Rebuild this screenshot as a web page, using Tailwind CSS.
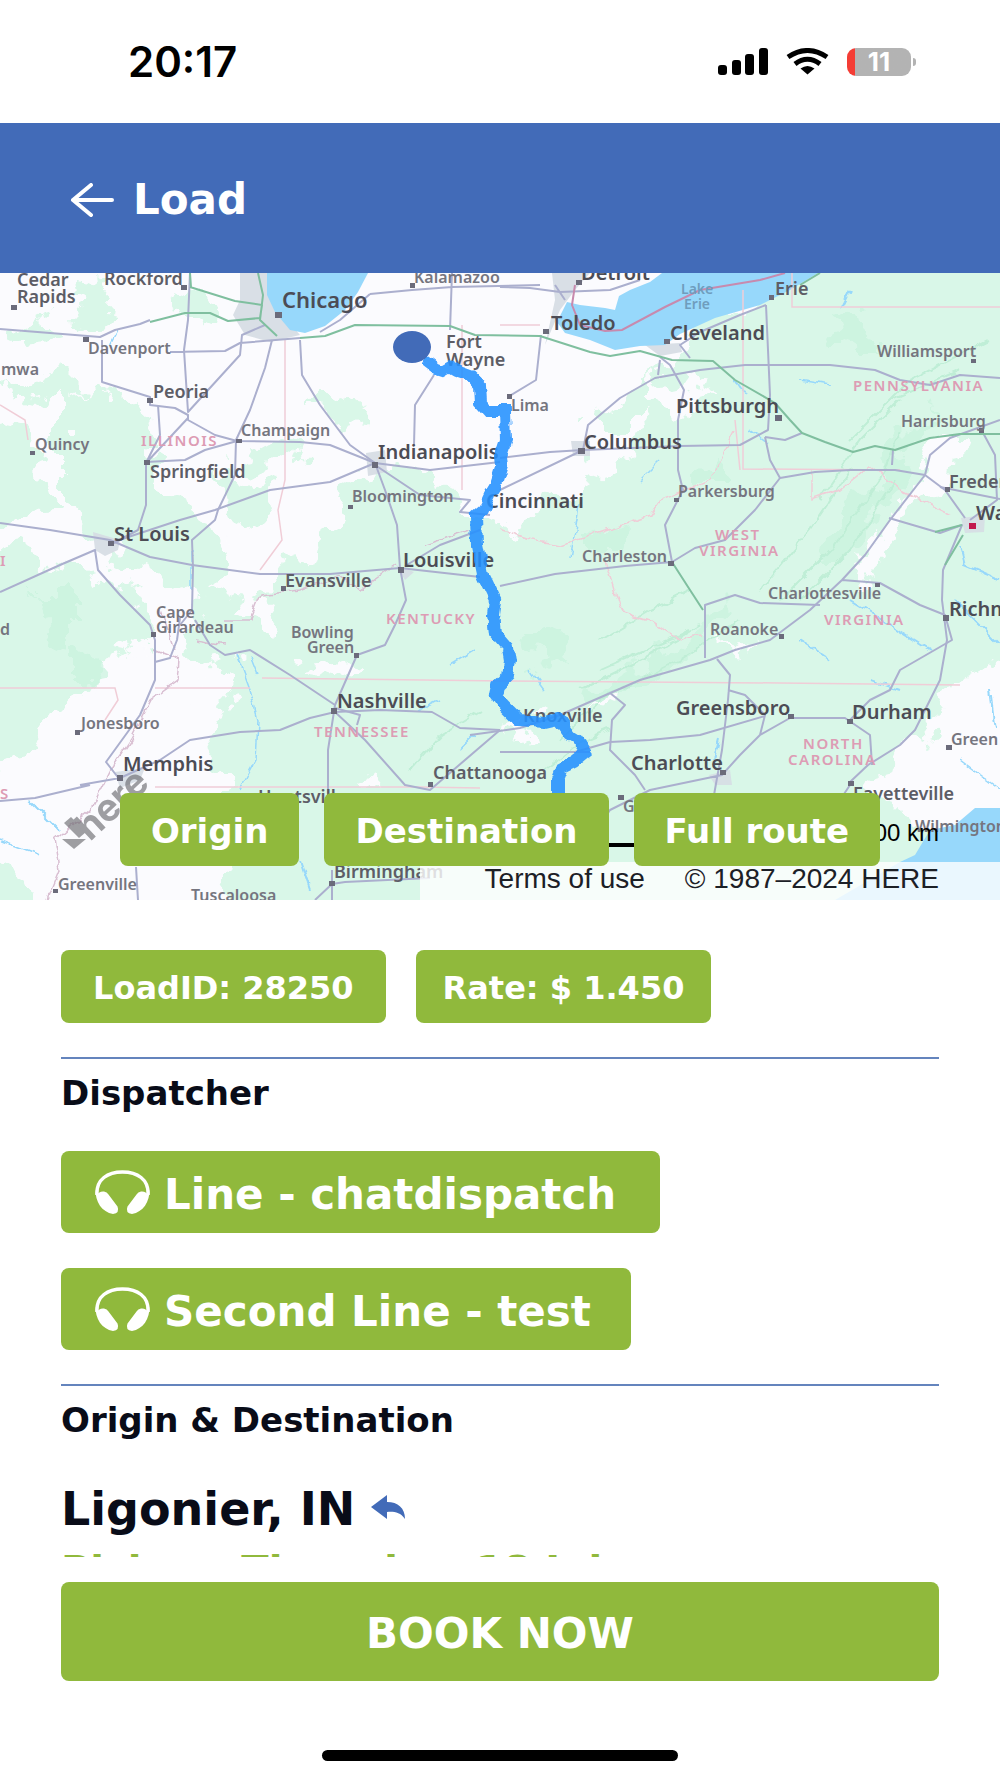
<!DOCTYPE html>
<html lang="en">
<head>
    <meta charset="UTF-8">
    <meta name="viewport" content="width=device-width, initial-scale=1.0">
    <title>Load</title>
    <script src="https://cdn.jsdelivr.net/npm/@tailwindcss/browser@4"></script>
</head>
<body class="bg-white h-screen flex flex-col overflow-hidden font-['DejaVu_Sans',sans-serif] text-[#090c18]">

    <!-- Status bar -->
    <div class="h-[123px] shrink-0 flex items-center justify-between pl-32 pr-[84px] text-black">
        <span class="font-['Inter',sans-serif] text-[42px] font-semibold">20:17</span>
        <div class="flex items-center gap-[18px]">
            <svg class="w-[50px] h-[27px]" viewBox="0 0 50 27" fill="currentColor">
                <rect x="0" y="17" width="9" height="10" rx="3"/>
                <rect x="14" y="12" width="9" height="15" rx="3"/>
                <rect x="27" y="6" width="9" height="21" rx="3"/>
                <rect x="41" y="0" width="9" height="27" rx="3"/>
            </svg>
            <svg class="w-[43px] h-[27px]" viewBox="0 0 43 27">
                <path d="M2 9Q21.500 -4 41 9M9 16Q21.500 6.500 34 16" fill="none" stroke="currentColor" stroke-width="5"/>
                <path d="M14.500 20.500Q21.500 15.500 28.500 20.500L21.500 26.500Z" fill="currentColor"/>
            </svg>
            <div class="flex items-center gap-[2px]">
                <div class="w-16 h-7 rounded-[9px] bg-linear-to-r from-[#f43d35] from-[12%] to-[#b3b3b3] to-[12%] flex items-center justify-center font-['Inter',sans-serif] text-[26px] font-bold text-white">11</div>
                <div class="w-[3px] h-2 rounded-r-full bg-[#b3b3b3]"></div>
            </div>
        </div>
    </div>

    <!-- Header -->
    <header class="h-[150px] shrink-0 flex items-center gap-[19px] px-[70px] pt-1 bg-[#426bb8] text-white">
        <button type="button" aria-label="Back">
            <svg class="w-[44px] h-[34px]" viewBox="0 0 44 34" fill="none" stroke="currentColor" stroke-width="4" stroke-linecap="round" stroke-linejoin="round">
                <path d="M42 17H3M21 2L3 17L21 32"/>
            </svg>
        </button>
        <h1 class="text-[42px] leading-[48px] font-bold">Load</h1>
    </header>

    <!-- Map -->
    <section class="relative shrink-0 overflow-hidden">
        <svg class="block w-full h-auto font-['Noto_Sans',sans-serif]" viewBox="0 273 1000 627">
            <defs>
                <filter id="rough" x="-10%" y="-10%" width="120%" height="120%">
                    <feTurbulence type="fractalNoise" baseFrequency="0.03" numOctaves="4" seed="7"/>
                    <feDisplacementMap in="SourceGraphic" scale="60" xChannelSelector="R" yChannelSelector="G"/>
                </filter>
                <filter id="wobble">
                    <feTurbulence type="fractalNoise" baseFrequency="0.08" numOctaves="2" seed="3"/>
                    <feDisplacementMap in="SourceGraphic" scale="9" xChannelSelector="R" yChannelSelector="G"/>
                </filter>
            </defs>
            <rect y="273" width="1000" height="627" fill="#fbfbfe"/>

            <!-- woodland -->
            <g fill="#d9f7e8" filter="url(#rough)">
                <path d="M1060 230H830L790 285L700 322L685 345L665 372L610 392L592 425L640 425L625 460L560 500L505 528L440 495L395 462L340 485L325 540L270 575L245 600L200 590L190 640L225 690L170 720L210 760L240 830L215 940H1060Z"/>
                <path d="M-50 540L60 560L95 575L150 600L145 640L95 670L40 740L-50 790Z"/>
                <path d="M62 395L105 385L150 425L160 480L185 500L160 530L90 545L62 500Z"/>
                <path d="M185 500L215 520L225 575L200 600L120 570L110 545Z"/>
                <path d="M0 400L30 440L55 520L-30 530V400Z"/>
                <path d="M0 380L70 365L90 385L40 405Z"/>
                <path d="M70 275L110 280L105 330L75 325ZM15 330L50 320L55 345L10 350Z"/>
                <path d="M215 470L275 490L260 530L225 510ZM250 440L300 450L290 470L255 465Z"/>
                <path d="M300 410L345 395L375 415L340 425ZM180 290L220 300L210 325L170 312Z"/>
                <path d="M-40 840L30 870L40 940H-40Z"/>
                <path d="M80 700L110 690L85 780L75 800Z"/>
            </g>
            <g fill="#c8f3de" opacity="0.7" filter="url(#rough)">
                <path d="M35 590L70 590L70 650L45 640ZM75 650L105 645L100 690L75 680Z"/>
                <path d="M525 640L560 625L570 660L535 665ZM595 530L630 525L625 550L595 550Z"/>
                <path d="M830 320L860 315L870 350L840 350ZM690 470L720 465L715 485L690 485Z"/>
                <path d="M590 690L680 640L720 600L730 610L680 665L600 710ZM820 560L890 440L930 400L915 450L850 560Z"/>
            </g>
            <!-- plains and valleys -->
            <g fill="#fbfbfe" filter="url(#rough)">
                <path d="M650 380L690 375L725 388L690 400L678 425L650 410Z"/>
                <path d="M235 510L290 500L330 520L320 555L280 570L240 570Z"/>
                <path d="M250 590L280 605L270 635L235 615ZM295 668L340 660L360 670L340 685L300 680Z"/>
                <path d="M140 645L160 660L150 720L230 670L235 690L205 760L130 830L130 920L40 930L30 880L-20 830L10 800L40 750L90 690Z"/>
                <path d="M860 560L910 480L940 440L960 440L950 490L910 500L880 560L850 590Z"/>
                <path d="M940 690L1020 650V860L930 830L870 790L890 760L930 740Z"/>
                <path d="M585 705L620 695L610 710ZM505 735L535 728L530 740ZM720 650L750 640L745 652Z"/>
                <path d="M375 770L390 772L385 785L360 790Z"/>
            </g>
            <!-- ridges -->
            <g fill="none" stroke="#bfeed6" stroke-width="2" filter="url(#wobble)">
                <path d="M560 740L600 700L680 660L740 620M580 690L640 660L700 625M600 670L690 630M545 770L575 745L610 730M780 600L830 550L880 480L900 430M800 600L850 550L895 480M760 590L810 530L850 470M820 500L860 440L900 400M870 420L910 380L990 340M850 440L890 400L960 370M410 770L440 735L480 710M600 640L650 610L690 590"/>
            </g>

            <!-- cities -->
            <g fill="#d6dde4" opacity="0.9">
                <path d="M240 273H268L275 305L300 335L270 342L245 335L233 315L240 300Z"/>
                <path d="M552 273H590L575 290L560 310L545 345L555 300Z"/>
                <path d="M93 532L120 540L118 550L105 556L95 550ZM366 453L385 450L387 472L368 476ZM571 441L590 441L590 456L573 456Z"/>
                <path d="M396 565L414 572L405 580ZM645 345L680 343L682 352L660 356ZM115 772L145 768L140 780L120 788ZM961 518L985 515L984 532L965 533ZM709 775L730 770L732 785L715 785Z"/>
            </g>

            <!-- water -->
            <g fill="#97d8fb">
                <path d="M267 273H368L358 292L345 310L325 326L305 333L290 330L275 312L267 295Z"/>
                <path d="M818 273L790 290L760 305L715 318L680 334L665 345L640 346L615 350L590 340L565 333L557 322L567 302L580 305L605 308L615 310L619 296L630 290L650 282L662 273Z"/>
                <path d="M1000 808L975 808L955 825L930 830L915 855L900 862V900H1000Z"/>
            </g>
            <path d="M910 862L900 862L835 900H1000V862Z" fill="#97d8fb"/>
            <g fill="none" stroke="#97d8fb" stroke-width="1.500" filter="url(#wobble)">
                <path d="M237 655L250 690L258 720L256 760L240 790M250 655L258 675M192 550V590M118 330L110 345M450 665L475 650M420 710L440 700M0 840L40 855"/>
                <path d="M460 750L475 735M840 310L850 290M800 640L830 660M870 680L900 690M720 740L715 760M850 600L930 650M955 600L1000 645M960 545L965 565L1000 580M990 690L995 730M30 800L60 830M300 860L310 890" stroke-width="2"/>
                <path d="M640 480L660 460M735 380L745 395M580 500L570 560M530 670L545 690M800 380L830 385M750 430L770 445M960 760L1000 790"/>
            </g>

            <!-- state borders -->
            <g fill="none" stroke="#f0cdd7" stroke-width="1.500">
                <path d="M0 688H115L118 700L105 720M155 688H250M262 678L505 681L640 682L780 683L960 685M155 787H420L480 788M743 290V469L900 470M792 273V307H1000M285 340V480L278 510L282 540L260 570M462 325V490M500 325H540M0 405L25 420L28 440M740 470L735 420"/>
                <path d="M500 530L530 540L560 545L590 535M590 535L650 515L660 500L710 480L735 430M812 470V500L840 490L870 465L900 490L950 515M605 560L620 610L650 620L680 640L700 635" filter="url(#wobble)"/>
                <path d="M155 650L180 660L178 680L150 700L130 740L110 770L90 810L55 840L60 870L48 900M160 610L175 650M195 640L225 645M225 620L250 620L260 595L300 590L340 575L360 590L395 565M425 545L470 530" stroke="#d9bfd2" filter="url(#wobble)"/>
            </g>

            <!-- roads -->
            <g fill="none" stroke="#abafce" stroke-width="2" stroke-linejoin="round">
                <path d="M0 329L50 333L100 337L115 330L140 324L150 320M102 340V382L150 397L150 405L175 408L188 415L188 420L215 435L237 441L300 442L330 445L375 463"/>
                <path d="M190 273L188 320L184 350L188 412L240 355L242 335L265 325M170 352L225 351L240 343L300 338"/>
                <path d="M272 340L265 368L250 410L236 440L235 475L218 510L215 520L192 540L193 568L192 610L180 625"/>
                <path d="M300 340L302 375L320 405L350 445L375 463L430 470L500 462"/>
                <path d="M146 463L188 418M158 405L160 435L146 463V505L138 530L110 545M146 462L185 460L205 450L237 441"/>
                <path d="M0 523L50 530L110 540L150 557L192 565L260 574L330 574L400 568L480 577M110 543L180 520L215 510L270 490L330 482L375 463"/>
                <path d="M375 463L385 490L397 525L400 568L406 600L395 625L385 645L357 655L335 705M375 465L420 495L470 500L460 512L490 515M405 566L440 545L480 530"/>
                <path d="M0 592L60 565L95 550L98 570L120 595L150 625L155 640V680L140 715L106 762L120 780M90 785L35 798L0 801M80 785L120 778L160 760L190 740L240 732L280 730L310 718L335 712L380 710L432 712L460 728L500 730"/>
                <path d="M180 618L177 640L170 658L155 662M195 620L210 645L225 655L250 650L290 675L335 705L328 750V795M335 712L365 740L405 785L430 790L500 730M335 708L360 715L357 725"/>
                <path d="M136 867L138 900M332 870V900M332 884L345 882L430 878M332 884L315 900"/>
                <path d="M370 294L412 290L452 287L540 285M452 273L450 330M434 375L415 405L414 445M370 294L340 320L320 332"/>
                <path d="M541 335L536 380L508 397M555 285L565 300M500 287L530 288L560 292L610 290L640 280"/>
                <path d="M500 490L583 450L680 446L740 445L768 430L770 395L766 305M500 458L550 452L583 450L588 425L620 398L655 378L700 370L745 365L830 365L875 370L900 380L930 385L960 375L1000 378"/>
                <path d="M766 305L740 315L700 332L680 345L690 358M660 357L670 365L684 390L678 420L678 470L683 490L665 525L672 562M660 360L658 375"/>
                <path d="M765 437L785 440L802 433M765 437L770 460L780 478L815 472L850 470L895 470L925 475L945 490L965 518M893 450L892 465M780 478L755 510L735 530L725 540L695 548L672 562L625 566L555 574L500 586"/>
                <path d="M1000 420L950 438L930 455L925 475L890 520L865 555L842 580L810 610L770 640L735 650L710 660L640 680L560 715L520 728L470 735M842 580L880 583L920 605L945 615L952 640L900 670L890 690L870 700L850 720"/>
                <path d="M982 431L995 455L997 500L970 520M940 487L1000 499M889 518L940 533L962 525L943 570L942 600L947 640L940 680L915 730L900 745L868 765L850 782"/>
                <path d="M717 659L730 675L728 700L722 750L714 795M728 690L745 695L765 715L760 735L790 718L845 718L870 735L872 765M760 735L740 755L722 775L650 790L610 810L600 825M765 716L700 735L650 740L610 742L575 752M705 658V605L735 595L760 603L820 605M610 693L625 705L612 720L610 750L635 775L645 790"/>
                <path d="M590 752L500 752M850 785L840 800"/>
            </g>
            <g fill="none" stroke="#7fbf9f" stroke-width="2" stroke-linejoin="round">
                <path d="M190 287L235 301L262 305L260 318L228 321L210 313L185 313L150 322M190 273L191 287M258 273L263 295L260 320L277 336M300 338L325 336L355 325L450 326L475 335L540 336L590 352L610 356L640 351L672 360L713 361L735 380L775 403L790 420L802 433L825 442L853 452L875 446L895 450L930 438L960 434L1000 434"/>
                <path d="M820 273L800 285M962 525L935 532M672 562L690 590L703 610M963 535L945 565"/>
            </g>
            <path d="M575 285L572 305L580 325L605 331L622 330L665 307L700 290L760 280L785 273" fill="none" stroke="#c78aae" stroke-width="2"/>

            <!-- place markers -->
            <g fill="#6b6b7b">
                <rect x="11" y="305" width="6" height="5"/><rect x="181" y="285" width="6" height="5"/><rect x="275" y="312" width="7" height="6"/>
                <rect x="83" y="337" width="6" height="5"/><rect x="147" y="398" width="6" height="5"/><rect x="30" y="451" width="5" height="4"/>
                <rect x="236" y="439" width="6" height="4"/><rect x="144" y="460" width="6" height="5"/><rect x="372" y="462" width="6" height="6"/>
                <rect x="348" y="505" width="5" height="4"/><rect x="108" y="541" width="6" height="5"/><rect x="398" y="567" width="6" height="6"/>
                <rect x="281" y="586" width="5" height="5"/><rect x="151" y="632" width="5" height="5"/><rect x="354" y="653" width="5" height="5"/>
                <rect x="331" y="708" width="6" height="6"/><rect x="75" y="730" width="5" height="5"/><rect x="117" y="775" width="6" height="6"/>
                <rect x="428" y="782" width="5" height="5"/><rect x="53" y="889" width="5" height="4"/><rect x="329" y="881" width="6" height="5"/>
                <rect x="410" y="283" width="5" height="5"/><rect x="576" y="280" width="6" height="5"/><rect x="543" y="329" width="6" height="5"/>
                <rect x="507" y="394" width="5" height="5"/><rect x="664" y="339" width="6" height="5"/><rect x="769" y="295" width="5" height="5"/>
                <rect x="971" y="359" width="5" height="4"/><rect x="775" y="415" width="7" height="6"/><rect x="979" y="428" width="5" height="5"/>
                <rect x="578" y="448" width="7" height="6"/><rect x="674" y="498" width="5" height="4"/><rect x="668" y="561" width="6" height="5"/>
                <rect x="945" y="487" width="5" height="5"/><rect x="875" y="583" width="5" height="4"/><rect x="779" y="634" width="5" height="5"/>
                <rect x="943" y="615" width="6" height="6"/><rect x="788" y="714" width="6" height="5"/><rect x="847" y="719" width="6" height="5"/>
                <rect x="946" y="745" width="6" height="5"/><rect x="720" y="770" width="6" height="5"/><rect x="848" y="781" width="6" height="5"/>
                <rect x="618" y="795" width="6" height="5"/>
                <rect x="969" y="523" width="7" height="6" fill="#c2184e"/>
            </g>

            <!-- labels -->
            <g class="text-[16px] font-semibold" fill="#75757f">
                <text x="88" y="354">Davenport</text>
                <text x="1" y="375">mwa</text>
                <text x="241" y="436">Champaign</text>
                <text x="35" y="450">Quincy</text>
                <text x="352" y="502">Bloomington</text>
                <text x="414" y="283">Kalamazoo</text>
                <text x="511" y="411">Lima</text>
                <text x="877" y="357">Williamsport</text>
                <text x="901" y="427">Harrisburg</text>
                <text x="678" y="497">Parkersburg</text>
                <text x="582" y="562">Charleston</text>
                <text x="768" y="599">Charlottesville</text>
                <text x="710" y="635">Roanoke</text>
                <text x="156" y="618">Cape</text>
                <text x="156" y="633">Girardeau</text>
                <text x="291" y="638">Bowling</text>
                <text x="307" y="653">Green</text>
                <text x="81" y="729">Jonesboro</text>
                <text x="58" y="890">Greenville</text>
                <text x="191" y="901">Tuscaloosa</text>
                <text x="915" y="832">Wilmington</text>
                <text x="951" y="745">Green</text>
                <text x="623" y="812">G</text>
                <text x="0" y="635">d</text>
            </g>
            <g class="text-[18px] font-semibold" fill="#5d5d66">
                <text x="17" y="286">Cedar</text>
                <text x="17" y="303">Rapids</text>
                <text x="104" y="285">Rockford</text>
                <text x="153" y="398">Peoria</text>
                <text x="150" y="478">Springfield</text>
                <text x="446" y="348">Fort</text>
                <text x="446" y="366">Wayne</text>
                <text x="285" y="587">Evansville</text>
                <text x="775" y="295">Erie</text>
                <text x="949" y="488">Frederick</text>
                <text x="258" y="803">Huntsville</text>
                <text x="433" y="779">Chattanooga</text>
                <text x="853" y="800">Fayetteville</text>
                <text x="523" y="722">Knoxville</text>
                <text x="334" y="878">Birmingham</text>
            </g>
            <g class="text-[20px] font-semibold" fill="#4c4c55">
                <text x="282" y="308" class="text-[22px]">Chicago</text>
                <text x="581" y="280">Detroit</text>
                <text x="551" y="330">Toledo</text>
                <text x="670" y="340">Cleveland</text>
                <text x="676" y="413">Pittsburgh</text>
                <text x="584" y="449">Columbus</text>
                <text x="486" y="508">Cincinnati</text>
                <text x="378" y="459">Indianapolis</text>
                <text x="114" y="541">St Louis</text>
                <text x="403" y="567">Louisville</text>
                <text x="337" y="708">Nashville</text>
                <text x="123" y="771">Memphis</text>
                <text x="676" y="715">Greensboro</text>
                <text x="852" y="719">Durham</text>
                <text x="631" y="770">Charlotte</text>
                <text x="949" y="616">Richmond</text>
                <text x="976" y="520">Washington</text>
            </g>
            <g class="text-[14px] font-semibold" fill="#6f9dbd">
                <text x="681" y="294">Lake</text>
                <text x="684" y="309">Erie</text>
            </g>
            <g class="text-[15px] font-semibold tracking-widest" fill="#dd9cb4">
                <text x="141" y="446">ILLINOIS</text>
                <text x="853" y="391">PENNSYLVANIA</text>
                <text x="715" y="540">WEST</text>
                <text x="699" y="556">VIRGINIA</text>
                <text x="824" y="625">VIRGINIA</text>
                <text x="386" y="624">KENTUCKY</text>
                <text x="314" y="737">TENNESSEE</text>
                <text x="803" y="749">NORTH</text>
                <text x="788" y="765">CAROLINA</text>
                <text x="0" y="566">I</text>
                <text x="0" y="799">S</text>
            </g>

            <!-- route -->
            <path d="M424 360L436 369L442 371L449 367L456 371L470 376L480 386L481 403L488 411L505 411L506 440L501 455L502 466L496 485L490 495L483 510L476 516L477 545L483 575L495 600L493 615L495 633L508 648L510 660L508 676L498 686L496 695L504 706L518 720L545 722L558 719L570 735L578 740L586 752L574 762L562 768L558 778V830" fill="none" stroke="#2491ff" stroke-opacity="0.88" stroke-width="12" filter="url(#wobble)"/>
            <ellipse cx="412" cy="347" rx="19" ry="16" fill="#426bb8"/>

            <!-- provider mark -->
            <g fill="#6d6d72" opacity="0.65">
                <path d="M62 839H86L74 849Z"/>
                <path d="M64 823L71 817L86 832L79 838Z"/>
                <text transform="translate(90 842) rotate(-43)" class="font-['Inter',sans-serif] text-[38px] font-bold">here</text>
            </g>
        </svg>

        <div class="absolute inset-x-0 bottom-0 font-['Liberation_Sans',sans-serif] text-[#1c2026]">
            <div class="flex items-end justify-end gap-3 pr-[61px] pb-[15px]">
                <div class="w-1/3 h-1 bg-black"></div>
                <span class="text-2xl leading-7 text-black">100 km</span>
            </div>
            <div class="h-[38px] ml-[420px] flex items-center justify-end gap-10 pr-[61px] pb-1 text-[28px] bg-white/80">
                <a href="#">Terms of use</a>
                <span>© 1987–2024 HERE</span>
            </div>
        </div>
        <div class="absolute inset-x-0 bottom-[34px] flex justify-center gap-[25px] text-[34px] font-bold text-white">
            <button type="button" class="h-[73px] px-[31px] pt-1 rounded-lg bg-[#90b93c]">Origin</button>
            <button type="button" class="h-[73px] px-[31px] pt-1 rounded-lg bg-[#90b93c]">Destination</button>
            <button type="button" class="h-[73px] px-[31px] pt-1 rounded-lg bg-[#90b93c]">Full route</button>
        </div>
    </section>

    <!-- Load details -->
    <main class="flex-1 min-h-0 overflow-hidden px-[61px] pt-[50px]">
        <div class="flex gap-[30px] text-[32px] font-bold text-white">
            <div class="h-[73px] px-8 pt-[2px] flex items-center rounded-lg bg-[#90b93c]">LoadID: 28250</div>
            <div class="h-[73px] px-[27px] pt-[2px] flex items-center rounded-lg bg-[#90b93c]">Rate: $ 1.450</div>
        </div>

        <hr class="mt-[34px] border-t-2 border-[#6484bd]">
        <h2 class="mt-[14px] text-[34px] leading-10 font-bold">Dispatcher</h2>
        <div class="mt-[38px] flex flex-col items-start gap-[35px] text-[42px] font-bold text-white">
            <button type="button" class="h-[82px] pl-[34px] pr-[44px] flex items-center gap-[14px] rounded-lg bg-[#90b93c]">
                <svg class="w-[55px] h-[44px]" viewBox="0 0 55 44">
                    <path d="M2 25C1 9 13 2 27.500 2S54 9 53 25" fill="none" stroke="currentColor" stroke-width="3.500"/>
                    <path d="M0.500 19L2 25Q4 21 9 21.500Q12 22 13.500 24.500L22.500 36.500Q25 43 18 44C7 42 0 32 0.500 19ZM54.500 19L53 25Q51 21 46 21.500Q43 22 41.500 24.500L32.500 36.500Q30 43 37 44C48 42 55 32 54.500 19Z" fill="currentColor"/>
                </svg>
                <span class="pt-1">Line - chatdispatch</span>
            </button>
            <button type="button" class="h-[82px] pl-[34px] pr-[40px] flex items-center gap-[14px] rounded-lg bg-[#90b93c]">
                <svg class="w-[55px] h-[44px]" viewBox="0 0 55 44">
                    <path d="M2 25C1 9 13 2 27.500 2S54 9 53 25" fill="none" stroke="currentColor" stroke-width="3.500"/>
                    <path d="M0.500 19L2 25Q4 21 9 21.500Q12 22 13.500 24.500L22.500 36.500Q25 43 18 44C7 42 0 32 0.500 19ZM54.500 19L53 25Q51 21 46 21.500Q43 22 41.500 24.500L32.500 36.500Q30 43 37 44C48 42 55 32 54.500 19Z" fill="currentColor"/>
                </svg>
                <span class="pt-1">Second Line - test</span>
            </button>
        </div>

        <hr class="mt-[34px] border-t-2 border-[#6484bd]">
        <h2 class="mt-[14px] text-[34px] leading-10 font-bold">Origin &amp; Destination</h2>
        <div class="mt-[41px] flex items-center gap-4">
            <h3 class="text-[46px] leading-14 font-bold">Ligonier, IN</h3>
            <svg class="w-[34px] h-6 mb-1 text-[#426bb8]" viewBox="0 0 34 24" fill="currentColor">
                <path d="M0 12L16 0V7C27 7 34 13 34 24C29 17 23 16.500 16 17V24Z"/>
            </svg>
        </div>
        <p class="mt-[10px] text-[40px] leading-[48px] font-bold text-[#90b93c] whitespace-nowrap">Pickup: Thursday, 18 Jul</p>
    </main>

    <!-- Bottom action -->
    <footer class="shrink-0 flex flex-col items-center px-[61px] pt-[25px] pb-[17px]">
        <button type="button" class="w-full h-[99px] pt-1 rounded-lg bg-[#90b93c] text-[42px] font-bold text-white">BOOK NOW</button>
        <div class="mt-[69px] w-[356px] h-[11px] rounded-full bg-black"></div>
    </footer>

</body>
</html>
